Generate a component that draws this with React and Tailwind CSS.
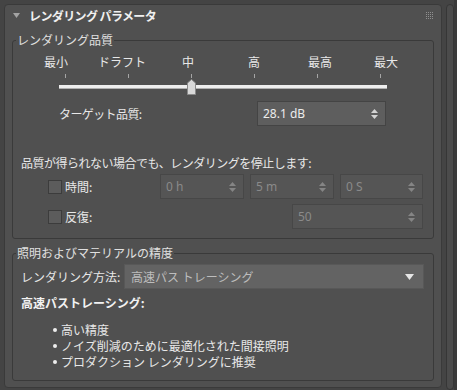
import React from "react";

function Arrows({ color }) {
  return (
    <svg width="7" height="10" viewBox="0 0 7 10" className="shrink-0">
      <path d="M3.5 0 L7 4 L0 4 Z M0 6 L7 6 L3.5 10 Z" fill={color} />
    </svg>
  );
}

function Spin({ className, value, disabled }) {
  return (
    <div
      className={
        "flex items-center justify-between h-[25px] pl-[5px] pr-[7px] border font-['Noto_Sans',sans-serif] text-[12px] " +
        (disabled
          ? "bg-[#555555] border-[#474747] text-[#8a8a8a] "
          : "bg-[#5e5e5e] border-[#444444] text-[#ececec] ") +
        className
      }
    >
      <span>{value}</span>
      <Arrows color={disabled ? "#858585" : "#d4d4d4"} />
    </div>
  );
}

function Check() {
  return <div className="w-[14px] h-[14px] bg-[#5c5c5c] border border-[#3c3c3c] shrink-0" />;
}

export default function App() {
  const labels = ["最小", "ドラフト", "中", "高", "最高", "最大"];
  return (
    <div className="w-[457px] h-[390px] bg-[#444444] flex overflow-hidden font-['Noto_Sans_CJK_JP',sans-serif] text-[12px] leading-[16px] text-[#e8e8e8]">
      <div className="ml-[4px] mt-[4px] w-[438px] h-[384px] shrink-0 bg-[#505050] border border-[#3a3a3a] rounded-[4px] flex flex-col px-[7px]">
        {/* header */}
        <div className="h-[21px] flex items-center relative">
          <svg width="7" height="5" viewBox="0 0 7 5" className="ml-[1px]">
            <path d="M0 0 L7 0 L3.5 5 Z" fill="#a3a3a3" />
          </svg>
          <span className="ml-[9px] font-bold tracking-[-0.6px] text-[#f0f0f0]">レンダリング パラメータ</span>
          <div className="ml-auto mr-[1px] grid grid-cols-4 gap-[1px]">
            {Array.from({ length: 16 }).map((_, i) => (
              <div key={i} className="w-[1px] h-[1px] bg-[#8f8f8f]" />
            ))}
          </div>
        </div>

        {/* group 1 */}
        <div className="relative mt-[14px] border border-[#3a3a3a] rounded-[3px] pb-[9px]">
          <div className="absolute left-[3px] top-[-9px] px-[1px] bg-[#505050] text-[#e0e0e0]">レンダリング品質</div>
          <div className="mt-[13px] ml-[10px] flex">
            {labels.map((l) => (
              <div key={l} className="w-[66px] text-center">{l}</div>
            ))}
          </div>
          <div className="mt-[4px] ml-[52px] w-[316px] h-[4px] flex justify-between">
            {labels.map((l) => (
              <div key={l} className="w-[1px] h-[4px] bg-[#a5a5a5]" />
            ))}
          </div>
          <div className="relative mt-[1px] h-[16px]">
            <div className="absolute left-[46px] top-[6px] w-[328px] h-[4px] bg-[#eeeeee] border-b border-[#b0b0b0]" />
            <svg width="9" height="16" viewBox="0 0 9 16" className="absolute left-[174px] top-0">
              <path d="M0.5 4 L4.5 0.5 L8.5 4 L8.5 15.5 L0.5 15.5 Z" fill="#d9d9d9" stroke="#8a8a8a" strokeWidth="1" />
            </svg>
          </div>
          <div className="mt-[6px] flex items-center">
            <div className="ml-[46px] w-[198px] tracking-[-0.6px]">ターゲット品質:</div>
            <Spin className="w-[129px]" value="28.1 dB" />
          </div>
          <div className="mt-[29px] pl-[8px] tracking-[-0.5px]">品質が得られない場合でも、レンダリングを停止します:</div>
          <div className="mt-[3px] flex items-center">
            <div className="ml-[35px] w-[112px] flex items-center">
              <Check />
              <span className="ml-[3px]">時間:</span>
            </div>
            <Spin className="w-[84px]" value="0 h" disabled />
            <Spin className="ml-[6px] w-[84px]" value="5 m" disabled />
            <Spin className="ml-[6px] w-[83px]" value="0 S" disabled />
          </div>
          <div className="mt-[5px] flex items-center">
            <div className="ml-[35px] w-[244px] flex items-center">
              <Check />
              <span className="ml-[3px]">反復:</span>
            </div>
            <Spin className="w-[131px]" value="50" disabled />
          </div>
        </div>

        {/* group 2 */}
        <div className="relative mt-[14px] border border-[#3a3a3a] rounded-[3px] pb-[10px]">
          <div className="absolute left-[3px] top-[-9px] px-[1px] bg-[#505050] text-[#e0e0e0]">照明およびマテリアルの精度</div>
          <div className="mt-[10px] flex items-center">
            <div className="pl-[8px] w-[111px]">レンダリング方法:</div>
            <div className="w-[300px] h-[25px] flex items-center justify-between pl-[6px] pr-[9px] bg-[#636363] border border-[#585858] text-[#bdbdbd]">
              <span>高速パス トレーシング</span>
              <svg width="9" height="6" viewBox="0 0 9 6">
                <path d="M0 0 L9 0 L4.5 6 Z" fill="#e6e6e6" />
              </svg>
            </div>
          </div>
          <div className="mt-[6px] pl-[8px] font-bold text-[#f2f2f2]">高速パストレーシング:</div>
          <div className="mt-[11px] pl-[40px] flex flex-col">
            {["高い精度", "ノイズ削減のために最適化された間接照明", "プロダクション レンダリングに推奨"].map((t) => (
              <div key={t} className="flex items-center">
                <div className="w-[4px] h-[4px] rounded-full bg-[#eeeeee] mr-[4px]" />
                <span>{t}</span>
              </div>
            ))}
          </div>
        </div>
      </div>

      {/* scrollbar */}
      <div className="w-[15px] h-full flex">
        <div className="w-[4px]" />
        <div className="mt-[4px] w-[8px] h-[386px] rounded-[4px] bg-[#4b4b4b] border border-[#363636]" />
        <div className="w-[3px] bg-[#3a3a3a]" />
      </div>
    </div>
  );
}
